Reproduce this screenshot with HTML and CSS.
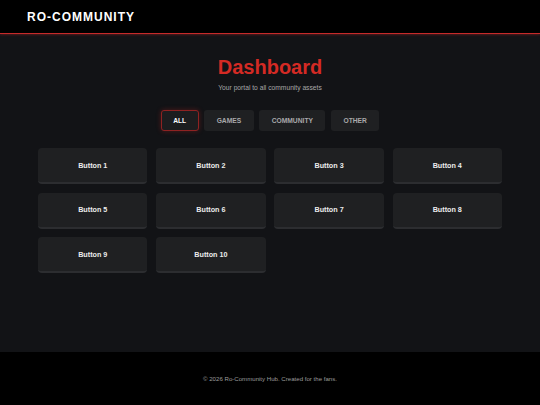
FILE: index.html
```html
<!DOCTYPE html>
<html lang="en">
<head>
<meta charset="utf-8">
<title>Ro-Community Hub</title>
<link rel="stylesheet" href="styles.css">
</head>
<body>
<header class="topbar">
  <div class="brand">RO-COMMUNITY</div>
</header>
<main class="main">
  <h1 class="title">Dashboard</h1>
  <p class="subtitle">Your portal to all community assets</p>
  <nav class="tabs">
    <button class="tab tab-active">ALL</button>
    <button class="tab">GAMES</button>
    <button class="tab">COMMUNITY</button>
    <button class="tab">OTHER</button>
  </nav>
  <section class="grid">
    <button class="card">Button 1</button>
    <button class="card">Button 2</button>
    <button class="card">Button 3</button>
    <button class="card">Button 4</button>
    <button class="card">Button 5</button>
    <button class="card">Button 6</button>
    <button class="card">Button 7</button>
    <button class="card">Button 8</button>
    <button class="card">Button 9</button>
    <button class="card">Button 10</button>
  </section>
</main>
<footer class="footer">
  <p class="footer-text">© 2026 Ro-Community Hub. Created for the fans.</p>
</footer>
</body>
</html>
```
FILE: styles.css
```css
* { box-sizing: border-box; }
html, body { margin: 0; padding: 0; }
body {
  min-height: 100vh;
  display: flex;
  flex-direction: column;
  background: #121316;
  font-family: "Liberation Sans", Arial, sans-serif;
  color: #e6e6e6;
}
.topbar {
  height: 34px;
  background: #000;
  border-bottom: 1px solid #c62a2a;
  box-shadow: 0 1px 2px rgba(198, 42, 42, 0.35);
  display: flex;
  align-items: center;
  padding: 0 27px;
}
.brand {
  font-size: 12px;
  font-weight: bold;
  letter-spacing: 1px;
  color: #fff;
}
.main {
  flex: 1;
  display: flex;
  flex-direction: column;
  align-items: center;
  padding: 22px 38px 30px;
}
.title {
  margin: 0;
  font-size: 20px;
  line-height: 23px;
  font-weight: bold;
  color: #d42a24;
}
.subtitle {
  margin: 5px 0 0;
  font-size: 6.7px;
  line-height: 8px;
  color: #a8a8a8;
}
.tabs {
  display: flex;
  gap: 5.5px;
  margin-top: 17.5px;
}
.tab {
  height: 21px;
  padding: 0 11.5px;
  border: 1px solid transparent;
  border-radius: 3px;
  background: #1f2022;
  color: #a9a9ab;
  font-family: "Liberation Sans", Arial, sans-serif;
  font-size: 6.7px;
  font-weight: bold;
}
.tab-active {
  color: #fff;
  background: #1c1d1f;
  border-color: #8e2222;
  box-shadow: 0 0 5px rgba(200, 40, 40, 0.35);
}
.grid {
  align-self: stretch;
  margin-top: 17.5px;
  display: grid;
  grid-template-columns: repeat(4, 1fr);
  gap: 8.7px;
}
.card {
  height: 36px;
  border: none;
  border-bottom: 2px solid #2c2d30;
  border-radius: 4px;
  background: #1f2022;
  color: #ececec;
  font-family: "Liberation Sans", Arial, sans-serif;
  font-size: 7.2px;
  font-weight: bold;
}
.footer {
  height: 53px;
  background: #000;
  display: flex;
  align-items: center;
  justify-content: center;
}
.footer-text {
  margin: 0;
  font-size: 6.1px;
  color: #9c9c9c;
}
```
